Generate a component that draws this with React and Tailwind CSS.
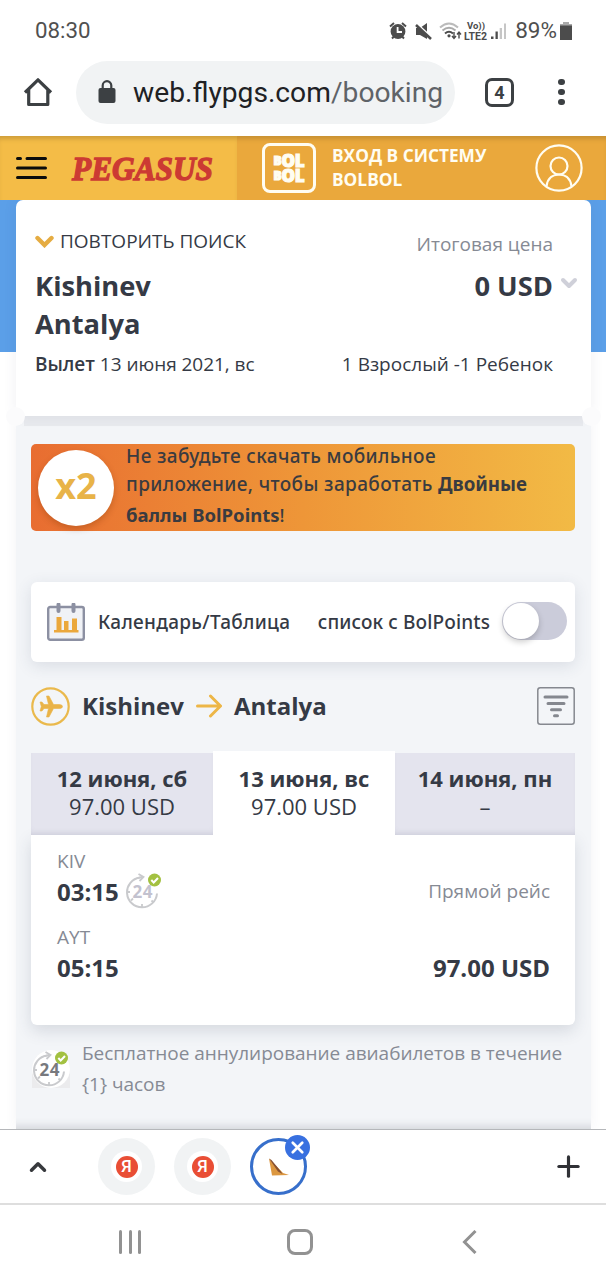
import { ChevronDown, ChevronUp, Plus, X } from 'lucide-react'

function StatusIcons() {
  return (
    <svg width="126" height="26" viewBox="0 0 126 26" fill="#4c4c4c">
      {/* alarm */}
      <circle cx="9" cy="13.5" r="7.4" />
      <path d="M1 8.500 L5 5 M17 8.500 L13 5 M3 20.500 L5.500 18 M15 20.500 L12.500 18" stroke="#4c4c4c" strokeWidth="2" />
      <path d="M8.600 9 V14 H13" fill="none" stroke="#fff" strokeWidth="1.800" />
      {/* muted speaker */}
      <path d="M27 10 H31 L38 5 V21 L31 17 H27 Z" />
      <path d="M27.500 5.500 L44 20.500" stroke="#fff" strokeWidth="2" />
      <path d="M27 7 L42 21" stroke="#4c4c4c" strokeWidth="2.600" />
      {/* wifi */}
      <g fill="none" strokeWidth="2">
        <path d="M51 9.500 Q60 1.500 69 9.500" stroke="#bbb" />
        <path d="M53.500 12.500 Q60 7 66.500 12.500" stroke="#aaa" />
        <path d="M56 15.500 Q60 12 64 15.500" stroke="#4c4c4c" />
      </g>
      <circle cx="60" cy="17.800" r="1.600" />
      <path d="M65 14 V20 M63 18 L65 20.500 L67 18 M70 20.500 V14 M68 16.500 L70 14 L72 16.500" fill="none" stroke="#4c4c4c" strokeWidth="1.400" />
      <text x="78" y="11" fontFamily="Roboto" fontWeight="700" fontSize="9.500" textLength="18">Vo))</text>
      <text x="75" y="21.500" fontFamily="Roboto" fontWeight="700" fontSize="10" textLength="23" lengthAdjust="spacingAndGlyphs">LTE2</text>
      {/* signal */}
      <path d="M102 18.500 H104.500 V21 H102 Z M106.500 13.500 H108.800 V21 H106.500 Z" />
      <path d="M110.700 10 H113 V21 H110.700 Z M115 5.500 H117 V21 H115 Z" fill="#c6c6c6" />
    </svg>
  )
}

function StatusBar() {
  return (
    <div className="flex h-[60px] flex-none items-center justify-between pl-[35px] pr-[34px] pt-px font-[Roboto] text-[#505050]">
      <span className="text-[22.3px]">08:30</span>
      <div className="flex items-center">
        <StatusIcons />
        <span className="text-[22.5px]">89%</span>
        <svg className="ml-[3px]" width="12" height="18" viewBox="0 0 12 18">
          <path d="M3 0 H9 V2 H12 V4 H0 V2 H3 Z" fill="#aaa" />
          <path d="M0 3.500 H12 V18 H0 Z" fill="#4c4c4c" />
        </svg>
      </div>
    </div>
  )
}

function Toolbar() {
  return (
    <div className="flex h-[76px] flex-none items-center pb-[12px] pl-[23px] font-[Roboto]">
      <svg width="30" height="30" viewBox="0 0 30 30" fill="none" stroke="#3c4043" strokeWidth="3.200" strokeLinejoin="round">
        <path d="M2 15.500 L15 2.800 L28 15.500 M5.700 12.500 V27.500 H24.800 V12.500" />
      </svg>
      <div className="ml-[23px] flex h-[63px] w-[379px] flex-none items-center rounded-full bg-[#f1f3f4] pl-[22px]">
        <svg width="18" height="24" viewBox="0 0 18 24">
          <rect x="0.500" y="8" width="17" height="15" rx="2" fill="#3c4043" />
          <path d="M4.700 9 V5.500 A4.300 4.300 0 0 1 13.300 5.500 V9" fill="none" stroke="#3c4043" strokeWidth="2.200" />
        </svg>
        <span className="ml-[17px] whitespace-nowrap pt-[2px] text-[28.2px] text-[#202124]">
          web.flypgs.com<span className="text-[#5f6368]">/booking</span>
        </span>
      </div>
      <div className="ml-[30px] flex size-[29px] items-center justify-center rounded-[7px] border-[3px] border-[#3c4043] text-[18px] font-bold text-[#3c4043]">4</div>
      <div className="ml-[44px] flex flex-col gap-[3.5px]">
        <i className="size-[6.5px] rounded-full bg-[#3c4043]" />
        <i className="size-[6.5px] rounded-full bg-[#3c4043]" />
        <i className="size-[6.5px] rounded-full bg-[#3c4043]" />
      </div>
    </div>
  )
}

function SiteHeader() {
  return (
    <header className="flex h-16 flex-none bg-[#eaa83c] shadow-[inset_0_5px_4px_-2px_rgba(120,90,30,0.3)]">
      <div className="flex w-[237px] items-center bg-[#f4bc47] pl-4 shadow-[inset_0_5px_4px_-2px_rgba(120,90,30,0.3)]">
        <svg width="31" height="24" viewBox="0 0 31 24" stroke="#0c0c0c" strokeWidth="3" strokeLinecap="round">
          <path d="M1.500 2.500 H4.500 M11 2.500 H29.500 M1.500 12 H29.500 M1.500 21.500 H29.500" />
        </svg>
        <svg className="ml-6" width="164" height="48" viewBox="0 0 164 48">
          <text x="1" y="36" textLength="141" lengthAdjust="spacingAndGlyphs" fontFamily="Liberation Serif" fontStyle="italic" fontWeight="700" fontSize="34" fill="#cc3a33" stroke="#cc3a33" strokeWidth="1.400">PEGASUS</text>
        </svg>
      </div>
      <div className="ml-[25px] mt-[7px] flex h-[50px] w-[54px] flex-col items-center justify-center rounded-[8px] border-[3px] border-[#fffdf2] pb-px text-[17px] font-extrabold tracking-[-0.2px] text-[#fffdf2] [-webkit-text-stroke:1.2px]">
        <div className="flex h-[15px] items-start leading-[15px]"><span className="text-[12px] leading-[15px]">B</span><span>OL</span></div>
        <div className="flex h-[15px] items-start leading-[15px]"><span className="text-[12px] leading-[15px]">B</span><span>OL</span></div>
      </div>
      <div className="ml-4 mt-2 w-[180px] text-[17.3px] font-bold leading-6 text-[#fffdf2]">
        ВХОД В СИСТЕМУ<br />BOLBOL
      </div>
      <svg className="ml-[23px] mt-2" width="48" height="48" viewBox="0 0 48 48" fill="none" stroke="#fffdf2" strokeWidth="2.200">
        <circle cx="24" cy="24" r="22.600" />
        <circle cx="24" cy="22" r="8.500" />
        <path d="M11.500 42.500 C12.500 33 19 30.500 24 30.500 C29 30.500 35.500 33 36.500 42.500" />
      </svg>
    </header>
  )
}

function Summary() {
  return (
    <section className="relative h-[216px] rounded-t-[7px] bg-white shadow-[0_0_14px_rgba(60,70,100,0.08)]">
      <div className="flex h-full flex-col pl-[19px] pr-[38px] pt-[26px]">
        <div className="flex h-[30px] items-center justify-between text-[19px]">
          <div className="flex items-center gap-[6px]">
            <svg width="19" height="13" viewBox="0 0 19 13" fill="none" stroke="#e5ac42" strokeWidth="4.400" strokeLinecap="round">
              <path d="M2.500 3 L9.500 10 L16.500 3" />
            </svg>
            <span>ПОВТОРИТЬ ПОИСК</span>
          </div>
          <span className="pt-1.5 text-[#868a94]">Итоговая цена</span>
        </div>
        <div className="mt-[11px] flex h-[38px] items-center justify-between text-[27.3px] font-bold">
          <span>Kishinev</span>
          <span className="relative">
            0 USD
            <ChevronDown className="absolute -right-[28px] top-[5px] text-[#cfd0d9]" size={24} strokeWidth={4} />
          </span>
        </div>
        <div className="flex h-[38px] items-center text-[27.3px] font-bold">Antalya</div>
        <div className="mt-[6px] flex h-[30px] items-center justify-between text-[19px]">
          <span className="tracking-[-0.04px]"><b className="font-semibold">Вылет</b> 13 июня 2021, вс</span>
          <span>1 Взрослый -1 Ребенок</span>
        </div>
      </div>
      <i className="absolute -bottom-[10px] -left-[10px] size-[19px] rounded-full bg-[#fbfbfc]" />
      <i className="absolute -bottom-[10px] -right-[10px] size-[19px] rounded-full bg-[#fbfbfc]" />
    </section>
  )
}

function PromoBanner() {
  return (
    <div className="mt-[18px] flex h-[87px] items-center rounded-[5px] bg-linear-to-r from-[#e86d31] via-[#ee9638] to-[#f2ba45] pl-[7px]">
      <div className="flex size-[76px] items-center justify-center rounded-full bg-white pb-[3px] text-[36px] font-bold text-[#e8b348] shadow-[0_3px_6px_rgba(120,50,0,0.3)]">
        x2
      </div>
      <div className="ml-3 whitespace-nowrap pb-px font-['Noto_Sans',sans-serif] text-[19px] font-medium tracking-[0.38px] text-[#3a3b40]">
        <div className="h-7 leading-7">Не забудьте скачать мобильное</div>
        <div className="h-7 leading-7">приложение, чтобы заработать <b className="text-[18.7px] tracking-normal">Двойные</b></div>
        <div className="h-[34px] text-[18.5px] leading-[34px] tracking-normal"><b>баллы BolPoints</b>!</div>
      </div>
    </div>
  )
}

function ViewOptions() {
  return (
    <div className="mt-[51px] flex h-20 items-center rounded-[6px] bg-white pl-4 pr-2 font-['Noto_Sans',sans-serif] text-[19px] font-medium shadow-[0_4px_16px_rgba(50,60,90,0.13)]">
      <svg width="38" height="38" viewBox="0 0 38 38">
        <rect x="1.200" y="4" width="35.600" height="32.800" rx="2" fill="#f0f2f6" stroke="#8c90a2" strokeWidth="2.400" />
        <path d="M11.500 1.500 V8 M26.500 1.500 V8" stroke="#8c90a2" strokeWidth="4" strokeLinecap="round" />
        <path d="M7 27 H9.500 V14 H14.500 V27 H17 V18 H21.500 V27 H25 V15.500 H30 V27 H31.500 V29.500 H7 Z" fill="#eba83c" />
      </svg>
      <span className="ml-[13px] tracking-[0.3px]">Календарь/Таблица</span>
      <span className="ml-auto tracking-[0.12px]">список с BolPoints</span>
      <div className="mb-[3px] ml-3 h-[38px] w-[65px] rounded-full bg-[#cbccda] p-px">
        <div className="size-9 rounded-full bg-white shadow-[0_3px_6px_rgba(0,0,0,0.2)]" />
      </div>
    </div>
  )
}

function RouteRow() {
  return (
    <div className="mt-[25px] flex h-[38px] items-center text-[24px] font-bold">
      <svg width="39" height="39" viewBox="0 0 39 39">
        <circle cx="19.500" cy="19.500" r="18.200" fill="none" stroke="#eab94c" strokeWidth="2.200" />
        <path d="M31.500 19.500 Q31.500 17.500 28 17.500 L22.500 17.500 L18 9 H15.500 L17.500 17.500 L13 17.500 L11 15 H9 L10.300 19.500 L9 24 H11 L13 21.500 L17.500 21.500 L15.500 30 H18 L22.500 21.500 L28 21.500 Q31.500 21.500 31.500 19.500 Z" fill="#eab348" stroke="#eab348" strokeWidth="0.600" />
      </svg>
      <span className="ml-3">Kishinev</span>
      <svg className="ml-3" width="26" height="24" viewBox="0 0 26 24" fill="none" stroke="#edb647" strokeWidth="3" strokeLinecap="round" strokeLinejoin="round">
        <path d="M1.500 12 H24 M14.500 2 L24.500 12 L14.500 22" />
      </svg>
      <span className="ml-3">Antalya</span>
      <svg className="ml-auto" width="38" height="38" viewBox="0 0 38 38" fill="none" stroke="#85888f">
        <rect x="0.800" y="0.800" width="36.400" height="36.400" rx="2.500" strokeWidth="1.500" />
        <path d="M8 10 H30 M11 16.500 H27 M14.500 22.700 H23.500 M17.500 28.800 H20.500" strokeWidth="3" strokeLinecap="round" />
      </svg>
    </div>
  )
}

const days = [
  { date: '12 июня, сб', price: '97.00 USD' },
  { date: '13 июня, вс', price: '97.00 USD', active: true },
  { date: '14 июня, пн', price: '–' },
]

function DayTabs() {
  return (
    <div className="mt-[26px] grid h-[84px] grid-cols-[182px_182px_180px] items-end">
      {days.map(day => (
        <div
          key={day.date}
          className={day.active
            ? 'flex h-[84px] flex-col items-center bg-white pt-[13px]'
            : 'flex h-[82px] flex-col items-center bg-[#e4e4ee] pt-[11px] shadow-[inset_0_-5px_6px_-4px_rgba(80,85,110,0.18)]'}
        >
          <span className="h-7 text-[22px] font-bold leading-7">{day.date}</span>
          <span className="h-7 text-[22px] leading-7">{day.price}</span>
        </div>
      ))}
    </div>
  )
}

function Badge24({ size, color, textColor }) {
  return (
    <svg width={size} height={size} viewBox="0 0 36 36" fill="none">
      <path d="M14 4.500 A15 15 0 1 0 31 20.500" stroke={color} strokeWidth="2" />
      <path d="M10.500 5.500 L16 3.800 M12.500 1 L17.500 4 L13.500 8" stroke={color} strokeWidth="1.800" />
      <path d="M1.500 19 H4 M5 27.500 L7 25.500 M16 34 V31 M27.500 29.500 L25.500 27.500" stroke={color} strokeWidth="1.800" />
      <text x="6.500" y="24.500" fontFamily="Open Sans" fontSize="17" fontWeight="700" textLength="20" fill={textColor}>24</text>
      <circle cx="28.500" cy="7" r="6.500" fill="#a3c141" />
      <path d="M25.300 7 L27.700 9.500 L32 5" stroke="#fff" strokeWidth="2" />
    </svg>
  )
}

function FlightCard() {
  return (
    <div className="h-[190px] rounded-b-[6px] bg-white pl-[26px] pr-[25px] pt-3 text-[19px] shadow-[0_6px_16px_rgba(50,60,90,0.15)]">
      <div className="flex h-7 items-center text-[#868a94]">KIV</div>
      <div className="flex h-[34px] items-center">
        <span className="text-[24px] font-bold">03:15</span>
        <div className="ml-[7px] pb-[3px]"><Badge24 size={36} color="#c9cacd" textColor="#c3c2cf" /></div>
        <span className="ml-auto pb-0.5 text-[#868a94]">Прямой рейс</span>
      </div>
      <div className="mt-[14px] flex h-7 items-center text-[#868a94]">AYT</div>
      <div className="flex h-[34px] items-center justify-between font-bold">
        <span className="text-[24px]">05:15</span>
        <span className="text-[24px]">97.00 USD</span>
      </div>
    </div>
  )
}

function BottomTabs() {
  return (
    <div className="flex h-[76px] flex-none items-center border-b-2 border-t border-b-[#dedede] border-t-[#b5b7ba] bg-white pl-[25px]">
      <ChevronUp size={26} strokeWidth={3.2} color="#37393d" />
      <div className="ml-[47px] flex gap-[19px]">
        {[0, 1].map(i => (
          <div key={i} className="flex size-[57px] items-center justify-center rounded-full bg-[#f1f3f4]">
            <div className="flex size-[31px] items-center justify-center rounded-full bg-white">
              <div className="flex size-[22px] items-center justify-center rounded-full bg-[#e94e35] font-[Roboto] text-[17px] font-medium leading-none text-white">Я</div>
            </div>
          </div>
        ))}
        <div className="relative flex size-[57px] items-center justify-center rounded-full border-[3px] border-[#376fcb]">
          <svg width="21" height="18" viewBox="0 0 21 18">
            <path d="M1 0.500 L15 15 L21 17 L4 17.500 Z" fill="#dc9740" />
            <path d="M1 0.500 L3.500 2 L12.500 13 L14.500 16 L10 13.500 Z" fill="#855032" />
          </svg>
          <div className="absolute -right-[6px] -top-[6px] flex size-[25px] items-center justify-center rounded-full bg-[#3870e0]">
            <X size={19} strokeWidth={3.4} color="#fff" />
          </div>
        </div>
      </div>
      <Plus className="ml-auto mr-[21px]" size={33} strokeWidth={2.3} color="#303136" />
    </div>
  )
}

function NavBar() {
  return (
    <div className="flex h-[75px] flex-none items-center bg-white pb-px pl-[119px]">
      <div className="flex gap-[6.5px]">
        <i className="h-6 w-[3px] rounded-full bg-[#929292]" />
        <i className="h-6 w-[3px] rounded-full bg-[#929292]" />
        <i className="h-6 w-[3px] rounded-full bg-[#929292]" />
      </div>
      <div className="ml-[146px] size-[26px] rounded-[8px] border-[3px] border-[#929292]" />
      <svg className="ml-[149px]" width="15" height="24" viewBox="0 0 15 24" fill="none" stroke="#929292" strokeWidth="3">
        <path d="M13.500 1 L2.500 12 L13.500 23" />
      </svg>
    </div>
  )
}

export default function App() {
  return (
    <div className="flex h-[1280px] w-[606px] flex-col overflow-hidden bg-white font-['Open_Sans',sans-serif] text-[#353a45]">
      <StatusBar />
      <Toolbar />
      <SiteHeader />
      <main className="h-[929px] flex-none overflow-hidden bg-[linear-gradient(#5b9fe8_152px,#fff_152px)] pl-4 pr-[15px]">
        <Summary />
        <div className="h-[713px] bg-[#f3f5f8] pl-[15px] pr-4 shadow-[0_0_12px_rgba(60,70,100,0.06),inset_0_-12px_10px_-10px_rgba(60,65,80,0.2)]">
          <div className="-ml-[7px] -mr-2 h-[10px] bg-[#e8eaee]" />
          <PromoBanner />
          <ViewOptions />
          <RouteRow />
          <DayTabs />
          <FlightCard />
          <div className="flex pt-[13px] text-[19px] text-[#868a94]">
            <div className="ml-px mt-[12px] flex size-[38px] items-center justify-center rounded-t-full bg-[#ebebed]">
              <div className="flex size-[38px] items-center justify-center rounded-full bg-white">
                <Badge24 size={36} color="#c9cacd" textColor="#77797e" />
              </div>
            </div>
            <div className="ml-3 whitespace-nowrap leading-[31px] tracking-[-0.03px]">
              Бесплатное аннулирование авиабилетов в течение<br />{'{1} часов'}
            </div>
          </div>
        </div>
      </main>
      <BottomTabs />
      <NavBar />
    </div>
  )
}
